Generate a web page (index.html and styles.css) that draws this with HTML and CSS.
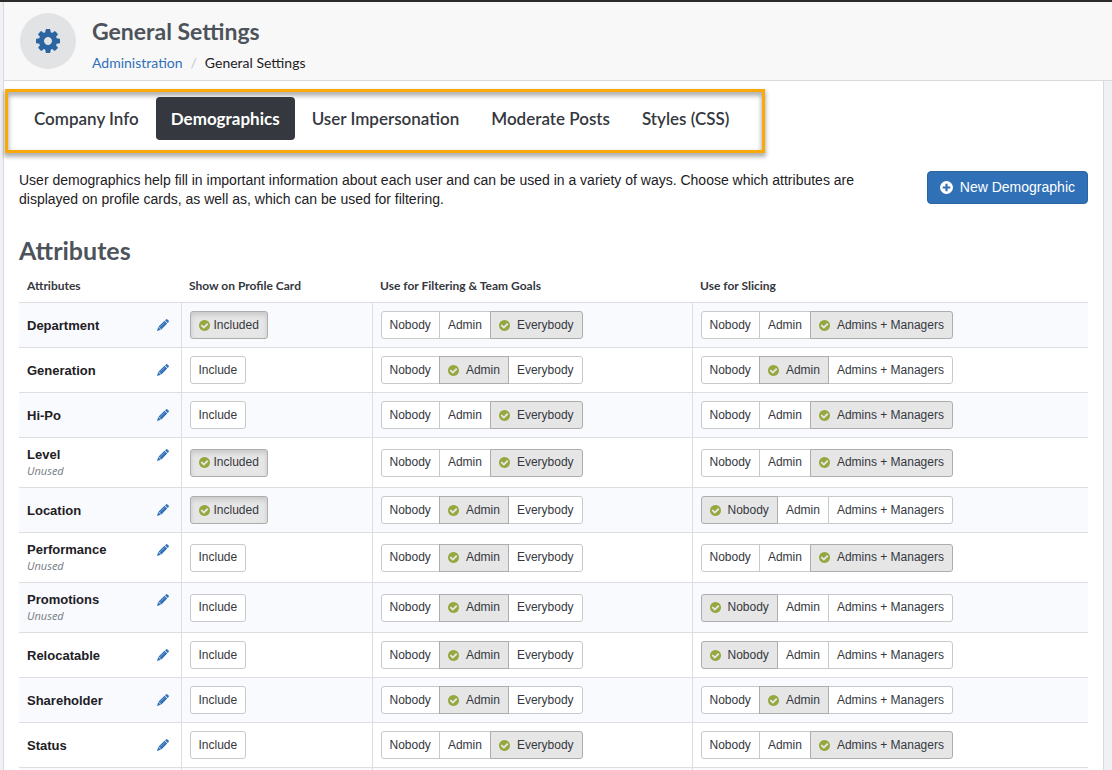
FILE: index.html
```
<!DOCTYPE html>
<html lang="en">
<head>
<meta charset="utf-8">
<title>General Settings</title>
<link rel="stylesheet" href="styles.css">
</head>
<body>
<svg class="sprite" aria-hidden="true">
<symbol id="cog" viewBox="0 128 1536 1536"><path d="M1024 896q0-106-75-181t-181-75-181 75-75 181 75 181 181 75 181-75 75-181zm512-109v222q0 12-8 23t-20 13l-185 28q-19 54-39 91 35 50 107 138 10 12 10 25t-9 23q-27 37-99 108t-94 71q-12 0-26-9l-138-108q-44 23-91 38-16 136-29 186-7 28-36 28h-222q-14 0-24.500-8.500t-11.500-21.500l-28-184q-49-16-90-37l-141 107q-10 9-25 9-14 0-25-11-126-114-165-168-7-10-7-23 0-12 8-23 15-21 51-66.500t54-70.500q-27-50-41-99l-183-27q-13-2-21-12.500t-8-23.500v-222q0-12 8-23t19-13l186-28q14-46 39-92-40-57-107-138-10-12-10-24 0-10 9-23 26-36 98.500-107.500t94.500-71.500q13 0 26 10l138 107q44-23 91-38 16-136 29-186 7-28 36-28h222q14 0 24.500 8.500t11.500 21.500l28 184q49 16 90 37l142-107q9-9 24-9 13 0 25 10 129 119 165 170 7 8 7 22 0 12-8 23-15 21-51 66.500t-54 70.500q26 50 41 98l183 28q13 2 21 12.500t8 23.500z"/></symbol>
<symbol id="ok" viewBox="128 128 1536 1536"><path d="M1412 734q0-28-18-46l-91-90q-19-19-45-19t-45 19l-408 407-226-226q-19-19-45-19t-45 19l-91 90q-18 18-18 46 0 27 18 45l362 362q19 19 45 19 27 0 46-19l543-543q18-18 18-45zm252 162q0 209-103 385.500t-279.500 279.500-385.500 103-385.500-103-279.500-279.500-103-385.500 103-385.500 279.500-279.500 385.500-103 385.500 103 279.500 279.500 103 385.500z"/></symbol>
<symbol id="plus" viewBox="0 0 12 12"><path fill-rule="evenodd" d="M6 0a6 6 0 1 0 0 12A6 6 0 0 0 6 0zM5 2.500h2V5h2.500v2H7v2.500H5V7H2.500V5H5z"/></symbol>
<symbol id="pencil" viewBox="0 0 12 12"><path d="M8 1.300 9 .4q.7-.6 1.400 0L11.600 1.600q.6.700 0 1.400L10.700 4zM7.500 1.800 10.200 4.500 4.400 10.400 1.600 7.600zM1.200 8.100 3.900 10.800 0 12z"/><path class="shine" d="M7.900 3.300 3.300 7.900"/></symbol>
</svg>
<header class="header">
<div class="badge"><svg class="cog"><use href="#cog"/></svg></div>
<div>
<h1>General Settings</h1>
<nav class="crumbs" aria-label="Breadcrumb"><a href="#">Administration</a><span class="slash">/</span><span>General Settings</span></nav>
</div>
</header>
<main class="main">
<nav class="tabs" aria-label="Settings"><a href="#">Company Info</a><a href="#" class="active" aria-current="page">Demographics</a><a href="#">User Impersonation</a><a href="#">Moderate Posts</a><a href="#">Styles (CSS)</a></nav>
<div class="content">
<div class="intro">
<p>User demographics help fill in important information about each user and can be used in a variety of ways. Choose which attributes are displayed on profile cards, as well as, which can be used for filtering.</p>
<button class="primary"><svg class="ico"><use href="#plus"/></svg>New Demographic</button>
</div>
<h2>Attributes</h2>
<table>
<colgroup><col class="c1"><col class="c2"><col class="c3"><col></colgroup>
<thead><tr><th>Attributes</th><th>Show on Profile Card</th><th>Use for Filtering &amp; Team Goals</th><th>Use for Slicing</th></tr></thead>
<tbody>
<tr><td><div class="name"><strong>Department</strong><button class="edit" aria-label="Edit Department"><svg><use href="#pencil"/></svg></button></div></td>
<td><button class="btn pressed"><svg><use href="#ok"/></svg>Included</button></td>
<td><div class="group"><button class="btn">Nobody</button><button class="btn">Admin</button><button class="btn on"><svg><use href="#ok"/></svg>Everybody</button></div></td>
<td><div class="group"><button class="btn">Nobody</button><button class="btn">Admin</button><button class="btn on"><svg><use href="#ok"/></svg>Admins + Managers</button></div></td></tr>
<tr><td><div class="name"><strong>Generation</strong><button class="edit" aria-label="Edit Generation"><svg><use href="#pencil"/></svg></button></div></td>
<td><button class="btn">Include</button></td>
<td><div class="group"><button class="btn">Nobody</button><button class="btn on"><svg><use href="#ok"/></svg>Admin</button><button class="btn">Everybody</button></div></td>
<td><div class="group"><button class="btn">Nobody</button><button class="btn on"><svg><use href="#ok"/></svg>Admin</button><button class="btn">Admins + Managers</button></div></td></tr>
<tr><td><div class="name"><strong>Hi-Po</strong><button class="edit" aria-label="Edit Hi-Po"><svg><use href="#pencil"/></svg></button></div></td>
<td><button class="btn">Include</button></td>
<td><div class="group"><button class="btn">Nobody</button><button class="btn">Admin</button><button class="btn on"><svg><use href="#ok"/></svg>Everybody</button></div></td>
<td><div class="group"><button class="btn">Nobody</button><button class="btn">Admin</button><button class="btn on"><svg><use href="#ok"/></svg>Admins + Managers</button></div></td></tr>
<tr><td><div class="name"><strong>Level</strong><button class="edit" aria-label="Edit Level"><svg><use href="#pencil"/></svg></button></div><em>Unused</em></td>
<td><button class="btn pressed"><svg><use href="#ok"/></svg>Included</button></td>
<td><div class="group"><button class="btn">Nobody</button><button class="btn">Admin</button><button class="btn on"><svg><use href="#ok"/></svg>Everybody</button></div></td>
<td><div class="group"><button class="btn">Nobody</button><button class="btn">Admin</button><button class="btn on"><svg><use href="#ok"/></svg>Admins + Managers</button></div></td></tr>
<tr><td><div class="name"><strong>Location</strong><button class="edit" aria-label="Edit Location"><svg><use href="#pencil"/></svg></button></div></td>
<td><button class="btn pressed"><svg><use href="#ok"/></svg>Included</button></td>
<td><div class="group"><button class="btn">Nobody</button><button class="btn on"><svg><use href="#ok"/></svg>Admin</button><button class="btn">Everybody</button></div></td>
<td><div class="group"><button class="btn on"><svg><use href="#ok"/></svg>Nobody</button><button class="btn">Admin</button><button class="btn">Admins + Managers</button></div></td></tr>
<tr><td><div class="name"><strong>Performance</strong><button class="edit" aria-label="Edit Performance"><svg><use href="#pencil"/></svg></button></div><em>Unused</em></td>
<td><button class="btn">Include</button></td>
<td><div class="group"><button class="btn">Nobody</button><button class="btn on"><svg><use href="#ok"/></svg>Admin</button><button class="btn">Everybody</button></div></td>
<td><div class="group"><button class="btn">Nobody</button><button class="btn">Admin</button><button class="btn on"><svg><use href="#ok"/></svg>Admins + Managers</button></div></td></tr>
<tr><td><div class="name"><strong>Promotions</strong><button class="edit" aria-label="Edit Promotions"><svg><use href="#pencil"/></svg></button></div><em>Unused</em></td>
<td><button class="btn">Include</button></td>
<td><div class="group"><button class="btn">Nobody</button><button class="btn on"><svg><use href="#ok"/></svg>Admin</button><button class="btn">Everybody</button></div></td>
<td><div class="group"><button class="btn on"><svg><use href="#ok"/></svg>Nobody</button><button class="btn">Admin</button><button class="btn">Admins + Managers</button></div></td></tr>
<tr><td><div class="name"><strong>Relocatable</strong><button class="edit" aria-label="Edit Relocatable"><svg><use href="#pencil"/></svg></button></div></td>
<td><button class="btn">Include</button></td>
<td><div class="group"><button class="btn">Nobody</button><button class="btn on"><svg><use href="#ok"/></svg>Admin</button><button class="btn">Everybody</button></div></td>
<td><div class="group"><button class="btn on"><svg><use href="#ok"/></svg>Nobody</button><button class="btn">Admin</button><button class="btn">Admins + Managers</button></div></td></tr>
<tr><td><div class="name"><strong>Shareholder</strong><button class="edit" aria-label="Edit Shareholder"><svg><use href="#pencil"/></svg></button></div></td>
<td><button class="btn">Include</button></td>
<td><div class="group"><button class="btn">Nobody</button><button class="btn on"><svg><use href="#ok"/></svg>Admin</button><button class="btn">Everybody</button></div></td>
<td><div class="group"><button class="btn">Nobody</button><button class="btn on"><svg><use href="#ok"/></svg>Admin</button><button class="btn">Admins + Managers</button></div></td></tr>
<tr><td><div class="name"><strong>Status</strong><button class="edit" aria-label="Edit Status"><svg><use href="#pencil"/></svg></button></div></td>
<td><button class="btn">Include</button></td>
<td><div class="group"><button class="btn">Nobody</button><button class="btn">Admin</button><button class="btn on"><svg><use href="#ok"/></svg>Everybody</button></div></td>
<td><div class="group"><button class="btn">Nobody</button><button class="btn">Admin</button><button class="btn on"><svg><use href="#ok"/></svg>Admins + Managers</button></div></td></tr>
<tr><td></td><td></td><td></td><td></td></tr>
</tbody>
</table>
</div>
</main>
</body>
</html>
```
FILE: styles.css
```
* { box-sizing: border-box; }
body {
  margin: 0;
  height: 100vh;
  overflow: hidden;
  display: flex;
  flex-direction: column;
  border-top: 2px solid #2b2b2b;
  padding-left: 3px;
  background: #f0f1f4;
  color: #1d2024;
  font: 14px/19px "Liberation Sans", Arial, sans-serif;
}
.sprite { display: none; }
svg { fill: currentColor; flex: none; }
button { font: inherit; cursor: pointer; }
a { text-decoration: none; }
h1, h2, .crumbs, .tabs, th { font-family: Lato, sans-serif; }
.header {
  display: flex;
  gap: 16px;
  padding: 11px 16px 7px;
  background: #f8f8f8;
  border-left: 1px solid #d9dadd;
  border-bottom: 1px solid #d9dadd;
}
.badge {
  display: flex;
  align-items: center;
  justify-content: center;
  width: 56px;
  height: 56px;
  border-radius: 50%;
  background: #e1e3e5;
  color: #2a65a2;
}
.cog { width: 24px; height: 24px; }
h1, h2 { margin: 0; color: #4d535b; font-weight: 700; }
h1 { font-size: 23px; line-height: 36px; }
.crumbs { display: flex; gap: 8px; font-size: 14px; line-height: 20px; padding-top: 4px; color: #1d2024; }
.crumbs a { color: #2f70b7; }
.slash { color: #c3c6ca; }
.main {
  flex: 1;
  min-height: 0;
  margin-right: 8px;
  padding: 8px 0 0 1px;
  background: #fff;
  border-left: 1px solid #d9dadd;
  border-right: 1px solid #d9dadd;
}
.tabs {
  display: flex;
  gap: 2px;
  width: fit-content;
  padding: 5px 18px 10px 11px;
  border: 3px solid #f9a90a;
  box-shadow: 0 3px 4px 1px rgba(0,0,0,.3), inset 0 3px 4px 1px rgba(0,0,0,.3);
}
.tabs a {
  padding: 11px 15px;
  border-radius: 4px;
  color: #35383e;
  font-size: 17px;
  line-height: 21px;
  font-weight: 600;
}
.tabs .active { background: #35383e; color: #fff; font-weight: 700; }
.content { padding: 18px 15px 0 14px; }
.intro { display: flex; justify-content: space-between; align-items: flex-start; }
.intro p { margin: 0; max-width: 850px; }
.primary {
  display: flex;
  align-items: center;
  gap: 7px;
  padding: 6px 12px;
  border: 1px solid #2a65a2;
  border-radius: 4px;
  background: #2f70b7;
  color: #fff;
}
.ico { width: 13px; height: 13px; }
h2 { font-size: 25px; line-height: 30px; margin-top: 26px; }
table { width: 100%; table-layout: fixed; border-collapse: collapse; }
.c1 { width: 162px; }
.c2 { width: 191px; }
.c3 { width: 320px; }
th { padding: 13px 8px 8px; text-align: left; font-size: 12px; line-height: 16px; color: #35383e; }
td { padding: 8px; border-top: 1px solid #dcdee2; vertical-align: middle; line-height: 17px; }
td + td { border-left: 1px solid #dcdee2; }
tbody tr:nth-child(odd) { background: #f9fafe; }
.name { display: flex; align-items: center; justify-content: space-between; font-size: 13px; }
em { display: block; font: italic 11px/16px "Open Sans", sans-serif; color: #747a82; }
.edit { display: flex; padding: 0; margin-right: 4px; border: 0; background: none; color: #2f70b7; }
.edit svg { width: 12px; height: 12px; }
.shine { stroke: #fff; stroke-width: .6; opacity: .6; }
.group { display: flex; }
.btn {
  display: flex;
  align-items: center;
  height: 28px;
  padding: 0 8px;
  border: 1px solid #c8c9cb;
  border-radius: 3px;
  background: #fff;
  color: #35383e;
  font-size: 12px;
}
.btn svg { width: 11px; height: 11px; color: #94a83d; }
.on svg { margin-right: 7px; }
.pressed svg { margin-right: 4px; }
.group .btn + .btn { margin-left: -1px; }
.group .btn:not(:first-child) { border-top-left-radius: 0; border-bottom-left-radius: 0; }
.group .btn:not(:last-child) { border-top-right-radius: 0; border-bottom-right-radius: 0; }
.on, .pressed { background: #e6e6e6; border-color: #adadad; z-index: 1; }
.pressed { box-shadow: inset 0 3px 5px rgba(0,0,0,.125); }
```
